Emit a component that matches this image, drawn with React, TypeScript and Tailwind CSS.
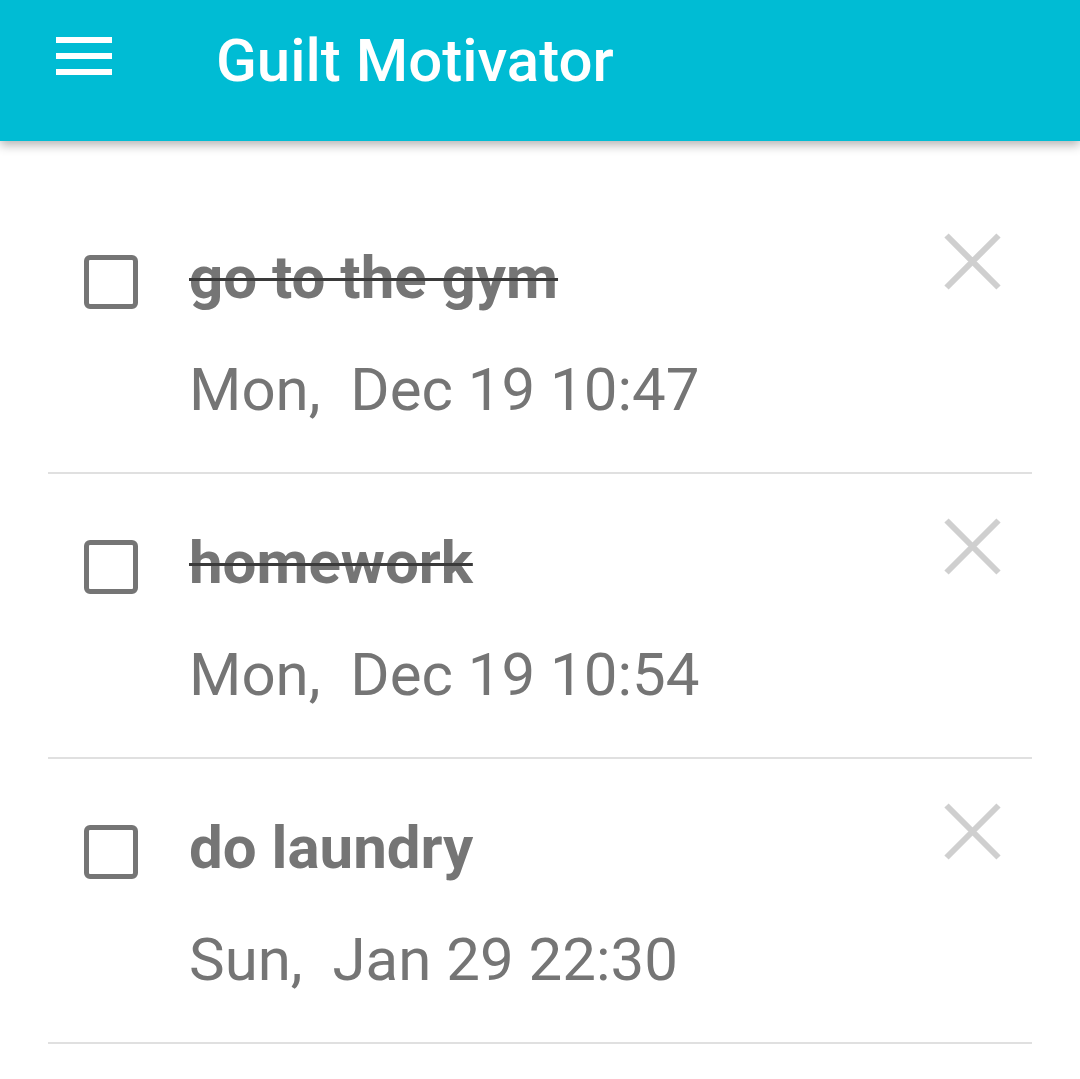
import React from 'react'

interface Task {
  id: number
  title: string
  date: string
  done: boolean
}

const tasks: Task[] = [
  { id: 1, title: 'go to the gym', date: 'Mon,  Dec 19 10:47', done: true },
  { id: 2, title: 'homework', date: 'Mon,  Dec 19 10:54', done: true },
  { id: 3, title: 'do laundry', date: 'Sun,  Jan 29 22:30', done: false },
]

function CloseIcon() {
  return (
    <svg width="57" height="57" viewBox="0 0 57 57" fill="none">
      <path d="M2.5 2.5 L54.5 54.5 M54.5 2.5 L2.5 54.5" stroke="#cfcfcf" strokeWidth="6" />
    </svg>
  )
}

function TaskRow({ task }: { task: Task }) {
  return (
    <div className="flex items-start border-b-2 border-[#e0e0e0] h-[285px]">
      {/* checkbox */}
      <div className="ml-[36px] mt-[66px] w-[54px] h-[54px] rounded-[6px] border-[5px] border-[#757575] shrink-0" />

      <div className="flex-1 ml-[51px] pt-[54px]">
        <div
          className={`text-[60px] leading-[70px] font-bold text-[#757575] ${
            task.done ? 'line-through decoration-[#3a3a3a] decoration-[3px]' : ''
          }`}
        >
          <span>{task.title}</span>
        </div>
        <div className="mt-[42px] text-[60px] leading-[70px] text-[#757575] whitespace-pre">
          {task.date}
        </div>
      </div>

      <button className="mt-[44px] mr-[31px] shrink-0">
        <CloseIcon />
      </button>
    </div>
  )
}

export default function App() {
  return (
    <div className="w-[1080px] h-[1079px] bg-white overflow-hidden font-['Roboto',sans-serif]">
      {/* toolbar */}
      <div className="relative z-10 h-[141px] bg-[#00bcd4] flex items-start pl-[56px] shadow-[0_4px_10px_rgba(0,0,0,0.3)]">
        <div className="mt-[37px] flex flex-col gap-[10px]">
          <div className="w-[56px] h-[6px] bg-white" />
          <div className="w-[56px] h-[6px] bg-white" />
          <div className="w-[56px] h-[6px] bg-white" />
        </div>
        <h1 className="ml-[104px] mt-[26px] text-[60px] leading-[70px] font-medium text-white">
          Guilt Motivator
        </h1>
      </div>

      {/* task list */}
      <div className="px-[48px] pt-[48px]">
        {tasks.map((task) => (
          <TaskRow key={task.id} task={task} />
        ))}
      </div>
    </div>
  )
}
